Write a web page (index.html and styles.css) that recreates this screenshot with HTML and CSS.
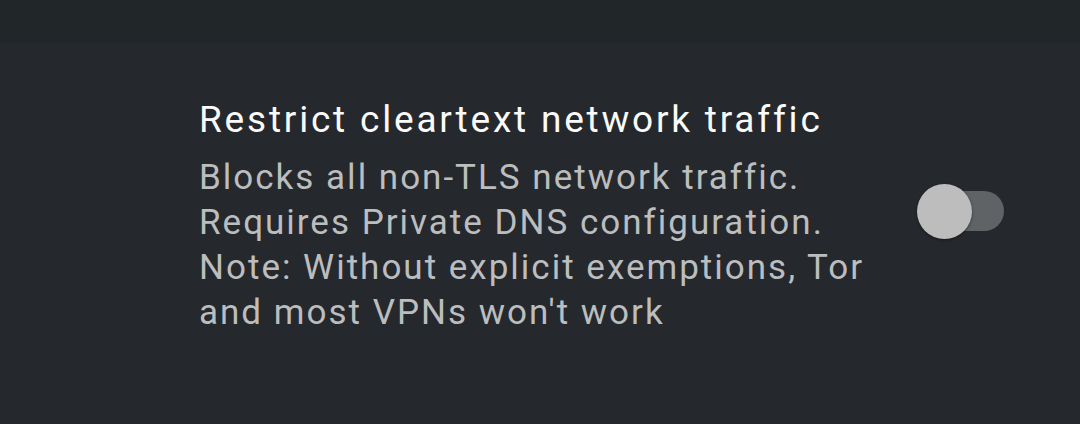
FILE: index.html
```html
<!DOCTYPE html>
<html>
	<head>
		<meta charset="utf-8">
		<title>Restrict cleartext network traffic</title>
		<link rel="stylesheet" href="styles.css">
	</head>
	<body>
		<div class="topbar"></div>
		<div class="pref">
			<div class="text">
				<div class="title">Restrict cleartext network traffic</div>
				<div class="summary">Blocks all non-TLS network traffic.<br>Requires Private DNS configuration.<br>Note: Without explicit exemptions, Tor<br>and most VPNs won't work</div>
			</div>
			<div class="switch">
				<div class="track"></div>
				<div class="thumb"></div>
			</div>
		</div>
	</body>
</html>
```

FILE: styles.css
```css
html, body{
	margin: 0;
	padding: 0;
	height: 100%;
}
body{
	background: #25292d;
	font-family: Roboto, "Noto Sans", sans-serif;
	overflow: hidden;
}
.topbar{
	height: 43px;
	background: #212629;
}
.pref{
	display: flex;
	align-items: center;
	padding: 54px 76px 0 199px;
}
.text{
	flex: 1;
	white-space: nowrap;
}
.title{
	font-size: 37px;
	line-height: 46px;
	letter-spacing: 2.8px;
	color: #fafafa;
}
.summary{
	margin-top: 12px;
	font-size: 35px;
	line-height: 45px;
	letter-spacing: 2px;
	color: #bcbdbe;
}
.switch{
	position: relative;
	width: 87px;
	height: 55px;
	margin-top: -10px;
}
.track{
	position: absolute;
	left: 12px;
	right: 0;
	top: 7px;
	height: 40px;
	border-radius: 20px;
	background: #5f6366;
}
.thumb{
	position: absolute;
	left: 0;
	top: 0;
	width: 55px;
	height: 55px;
	border-radius: 50%;
	background: #bdbdbd;
	box-shadow: 0 1px 3px rgba(0, 0, 0, 0.45);
}
```
